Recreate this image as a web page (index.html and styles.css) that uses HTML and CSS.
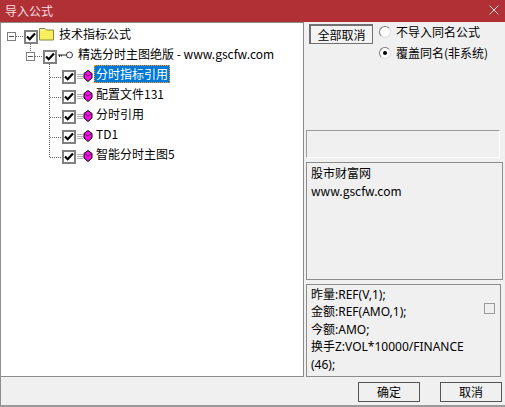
FILE: index.html
```html
<!DOCTYPE html>
<html lang="zh">
<head>
<meta charset="utf-8">
<title>导入公式</title>
<link rel="stylesheet" href="styles.css">
</head>
<body>
<div class="window">
  <header class="titlebar">
    <span class="title">导入公式</span>
    <svg class="close" width="10" height="10" viewBox="0 0 10 10"><path d="M0.5 0.5L9.5 9.5M9.5 0.5L0.5 9.5" stroke="#f3dcdc" stroke-width="1" fill="none"/></svg>
  </header>
  <main class="body">
    <section class="tree">
      <svg class="connectors" width="100" height="170" viewBox="0 0 100 170">
        <g stroke="#666" stroke-width="1" stroke-dasharray="1 1" fill="none" shape-rendering="crispEdges">
          <path d="M16 13.5H24"/>
          <path d="M30.5 21V29"/>
          <path d="M35 33.5H43"/>
          <path d="M49.5 41V134"/>
          <path d="M50 54.5H62M50 74.5H62M50 94.5H62M50 114.5H62M50 134.5H62"/>
        </g>
      </svg>
      <div class="row row-root">
        <span class="exp"></span>
        <span class="check"><svg width="10" height="9" viewBox="0 0 10 9"><path d="M1 4.5L3.7 7.2L9 1.6" stroke="#000" stroke-width="2.2" fill="none"/></svg></span>
        <svg class="folder" width="17" height="14" viewBox="0 0 17 14"><path d="M1.5 3.5V1.5H7L8.5 3H15.5V13H1.5Z" fill="#f7ef5e" stroke="#8a8a3a"/><path d="M2 2H7V3.5H2Z" fill="#fff7b0"/></svg>
        <span class="label">技术指标公式</span>
      </div>
      <div class="row row-sub">
        <span class="exp"></span>
        <span class="check"><svg width="10" height="9" viewBox="0 0 10 9"><path d="M1 4.5L3.7 7.2L9 1.6" stroke="#000" stroke-width="2.2" fill="none"/></svg></span>
        <svg class="key" width="15" height="8" viewBox="0 0 15 8"><path d="M0 4H9M1.5 4V6M3.5 4V5.5" stroke="#222" fill="none"/><circle cx="11.5" cy="4" r="3" fill="#fff" stroke="#333"/></svg>
        <span class="label">精选分时主图绝版 - www.gscfw.com</span>
      </div>
      <div class="row row-item">
        <span class="check"><svg width="10" height="9" viewBox="0 0 10 9"><path d="M1 4.5L3.7 7.2L9 1.6" stroke="#000" stroke-width="2.2" fill="none"/></svg></span>
        <svg class="gem" width="17" height="12" viewBox="0 0 17 12"><path d="M1 4.5H7M1 6.5H7M1 8.5H7" stroke="#b0b0b0" fill="none"/><path d="M12 .5L16 3.5V8L12 11.5L8 8V3.5Z" fill="#f010e0" stroke="#000"/><path d="M9 4L12 6L15 4" stroke="#80107a" fill="none"/></svg>
        <span class="label selected">分时指标引用</span>
      </div>
      <div class="row row-item">
        <span class="check"><svg width="10" height="9" viewBox="0 0 10 9"><path d="M1 4.5L3.7 7.2L9 1.6" stroke="#000" stroke-width="2.2" fill="none"/></svg></span>
        <svg class="gem" width="17" height="12" viewBox="0 0 17 12"><path d="M1 4.5H7M1 6.5H7M1 8.5H7" stroke="#b0b0b0" fill="none"/><path d="M12 .5L16 3.5V8L12 11.5L8 8V3.5Z" fill="#f010e0" stroke="#000"/><path d="M9 4L12 6L15 4" stroke="#80107a" fill="none"/></svg>
        <span class="label">配置文件131</span>
      </div>
      <div class="row row-item">
        <span class="check"><svg width="10" height="9" viewBox="0 0 10 9"><path d="M1 4.5L3.7 7.2L9 1.6" stroke="#000" stroke-width="2.2" fill="none"/></svg></span>
        <svg class="gem" width="17" height="12" viewBox="0 0 17 12"><path d="M1 4.5H7M1 6.5H7M1 8.5H7" stroke="#b0b0b0" fill="none"/><path d="M12 .5L16 3.5V8L12 11.5L8 8V3.5Z" fill="#f010e0" stroke="#000"/><path d="M9 4L12 6L15 4" stroke="#80107a" fill="none"/></svg>
        <span class="label">分时引用</span>
      </div>
      <div class="row row-item">
        <span class="check"><svg width="10" height="9" viewBox="0 0 10 9"><path d="M1 4.5L3.7 7.2L9 1.6" stroke="#000" stroke-width="2.2" fill="none"/></svg></span>
        <svg class="gem" width="17" height="12" viewBox="0 0 17 12"><path d="M1 4.5H7M1 6.5H7M1 8.5H7" stroke="#b0b0b0" fill="none"/><path d="M12 .5L16 3.5V8L12 11.5L8 8V3.5Z" fill="#f010e0" stroke="#000"/><path d="M9 4L12 6L15 4" stroke="#80107a" fill="none"/></svg>
        <span class="label">TD1</span>
      </div>
      <div class="row row-item">
        <span class="check"><svg width="10" height="9" viewBox="0 0 10 9"><path d="M1 4.5L3.7 7.2L9 1.6" stroke="#000" stroke-width="2.2" fill="none"/></svg></span>
        <svg class="gem" width="17" height="12" viewBox="0 0 17 12"><path d="M1 4.5H7M1 6.5H7M1 8.5H7" stroke="#b0b0b0" fill="none"/><path d="M12 .5L16 3.5V8L12 11.5L8 8V3.5Z" fill="#f010e0" stroke="#000"/><path d="M9 4L12 6L15 4" stroke="#80107a" fill="none"/></svg>
        <span class="label">智能分时主图5</span>
      </div>
    </section>
    <aside class="side">
      <div class="options">
        <button class="btn btn-all">全部取消</button>
        <div class="radios">
          <div class="radio-row"><span class="radio"></span><span>不导入同名公式</span></div>
          <div class="radio-row"><span class="radio on"></span><span>覆盖同名(非系统)</span></div>
        </div>
      </div>
      <div class="blank"></div>
      <div class="info">股市财富网<br>www.gscfw.com</div>
      <div class="code">
        <div class="code-text">昨量:REF(V,1);<br>金额:REF(AMO,1);<br>今额:AMO;<br>换手Z:VOL*10000/FINANCE<br>(46);</div>
        <span class="square"></span>
      </div>
    </aside>
  </main>
  <footer class="footer">
    <button class="btn btn-foot">确定</button>
    <button class="btn btn-foot">取消</button>
  </footer>
</div>
</body>
</html>
```
FILE: styles.css
```css
* { box-sizing: border-box; }
html, body { margin: 0; padding: 0; }
body {
  width: 505px;
  height: 407px;
  overflow: hidden;
  font-family: "Noto Sans CJK SC", "Noto Sans", sans-serif;
  font-size: 12px;
  color: #000;
  background: #f0f0f0;
}
.window {
  width: 505px;
  height: 407px;
  display: flex;
  flex-direction: column;
  background: #f0f0f0;
  border-left: 1px solid #8f8f8f;
  border-bottom: 2px solid #9a9a9a;
}
.titlebar {
  height: 22px;
  flex: none;
  margin-left: -1px;
  background: #b03036;
  display: flex;
  align-items: center;
  justify-content: space-between;
  padding: 0 6px 2px 5px;
  color: #f6dfe0;
  font-size: 12px;
}
.close { margin-top: 0; }
.body {
  flex: none;
  height: 355px;
  display: flex;
}
.tree {
  position: relative;
  width: 303px;
  height: 355px;
  background: #fff;
  border: 1px solid #8c8c8c;
  border-left: 0;
  padding-top: 2px;
}
.connectors {
  position: absolute;
  top: 0;
  left: -1px;
  pointer-events: none;
}
.row {
  height: 20px;
  display: flex;
  align-items: center;
  white-space: nowrap;
  line-height: 18px;
}
.row-root { padding-left: 6px; margin-top: 1px; }
.row-sub { padding-left: 25px; }
.row-item { padding-left: 61px; }
.exp {
  width: 9px;
  height: 9px;
  border: 1px solid #7d7d7d;
  background: linear-gradient(#555, #555) center / 5px 1px no-repeat #fff;
  margin-right: 8px;
  flex: none;
}
.check {
  width: 14px;
  height: 14px;
  border: 2px solid #808080;
  background: #fff;
  display: flex;
  align-items: center;
  justify-content: center;
  flex: none;
  margin-top: 1px;
}
.folder { margin-top: -4px; margin-right: 4px; flex: none; }
.key { margin-left: 1px; margin-right: 5px; margin-top: -3px; flex: none; }
.gem { margin-left: 0; margin-right: 1px; margin-top: -1px; flex: none; }
.label { color: #000; height: 18px; margin-bottom: 4px; }
.row-item .label { padding: 0 2px; }
.selected {
  background: #0078d7;
  color: #fff;
  outline: 1px dotted #ff9a1f;
  outline-offset: -1px;
}
.side {
  width: 201px;
  flex: none;
  padding-left: 2px;
  display: flex;
  flex-direction: column;
}
.options {
  height: 108px;
  padding: 2px 0 0 3px;
  display: flex;
  align-items: flex-start;
}
.btn {
  font: inherit;
  color: #000;
  padding: 0;
  background: #f0f0f0;
  display: block;
}
.btn-all {
  width: 64px;
  height: 20px;
  border: 2px solid #707070;
  border-right-width: 1px;
  border-bottom-width: 1px;
  line-height: 16px;
  background: #f3f3f3;
}
.radios { margin-left: 6px; margin-top: -3px; }
.radio-row {
  height: 21px;
  display: flex;
  align-items: center;
  gap: 5px;
  white-space: nowrap;
}
.radio {
  width: 12px;
  height: 12px;
  border-radius: 50%;
  background: #fff;
  border: 1px solid;
  border-color: #7a7a7a #dcdcdc #dcdcdc #7a7a7a;
  flex: none;
  position: relative;
}
.radio.on::after {
  content: "";
  position: absolute;
  left: 3px;
  top: 3px;
  width: 4px;
  height: 4px;
  border-radius: 50%;
  background: #000;
}
.blank {
  width: 194px;
  height: 28px;
  border-top: 1px solid #999;
  border-left: 1px solid #999;
  border-right: 1px solid #fff;
  border-bottom: 1px solid #fff;
}
.info {
  margin-top: 4px;
  width: 197px;
  height: 118px;
  border: 1px solid #8c8c8c;
  padding: 1px 4px;
  line-height: 18px;
}
.code {
  margin-top: 4px;
  width: 195px;
  height: 93px;
  border: 1px solid #8c8c8c;
  padding: 0 4px;
  line-height: 17.4px;
  display: flex;
  justify-content: space-between;
  font-family: "Noto Sans", "Noto Sans CJK SC", sans-serif;
}
.code-text { width: 170px; white-space: nowrap; padding-top: 1px; }
.square {
  width: 11px;
  height: 11px;
  border: 1px solid #9a9a9a;
  margin: 18px 1px 0 0;
  flex: none;
}
.footer {
  flex: 1;
  display: flex;
  justify-content: flex-end;
  align-items: flex-start;
  gap: 20px;
  padding: 5px 3px 0 0;
}
.btn-foot {
  width: 62px;
  height: 20px;
  border: 1px solid #555;
  line-height: 16px;
}
```
